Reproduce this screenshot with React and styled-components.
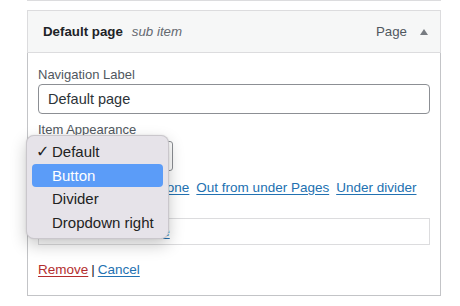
import React from "react";
import styled, { createGlobalStyle } from "styled-components";

const GlobalStyle = createGlobalStyle`
  body {
    margin: 0;
    background: #fff;
    font-family: "Liberation Sans", Arial, sans-serif;
    color: #1d2327;
  }
`;

const Page = styled.div`
  width: 460px;
  height: 306px;
  overflow: hidden;
`;

const PrevItem = styled.div`
  margin: 0 19px 0 27px;
  height: 1px;
  background: #dcdcde;
`;

const Card = styled.div`
  margin: 9px 19px 0 27px;
`;

const Header = styled.div`
  display: flex;
  align-items: center;
  height: 41px;
  padding: 0 12px 0 15px;
  background: #f6f7f7;
  border: 1px solid #dcdcde;
  font-size: 13.3px;
`;

const Title = styled.span`
  font-weight: bold;
  color: #1d2327;
`;

const SubTitle = styled.span`
  margin-left: 9px;
  font-style: italic;
  color: #646970;
  flex: 1;
`;

const ItemType = styled.span`
  color: #50575e;
  margin-right: 13px;
`;

const Body = styled.div`
  position: relative;
  padding: 13px 10px 16px;
  border: 1px solid #c3c4c7;
  border-top: none;
  font-size: 13px;
`;

const Label = styled.div`
  line-height: 17px;
  color: #50575e;
  margin-top: ${(p) => p.$gap || 0}px;
`;

const TextInput = styled.div`
  margin-top: 1px;
  height: 28px;
  display: flex;
  align-items: center;
  padding: 0 9px;
  border: 1px solid #8c8f94;
  border-radius: 4px;
  font-size: 14.5px;
  color: #2c3338;
`;

const SelectBox = styled.div`
  margin-top: 3px;
  width: 133px;
  height: 28px;
  border: 1px solid #8c8f94;
  border-radius: 3px;
`;

const LinkRow = styled.div`
  margin-top: 8px;
  display: flex;
  gap: 7px;
  line-height: 18px;
  font-size: 13.5px;
  color: #50575e;
`;

const A = styled.a`
  color: ${(p) => (p.$danger ? "#b32d2e" : "#2271b1")};
  text-decoration: underline;
  text-underline-offset: 2px;
  cursor: pointer;
`;

const Original = styled.div`
  margin-top: 21px;
  height: 25px;
  display: flex;
  align-items: center;
  gap: 4px;
  padding: 0 10px;
  border: 1px solid #dcdcde;
  color: #646970;
  font-size: 12px;
`;

const Actions = styled.div`
  margin-top: 16px;
  line-height: 18px;
  font-size: 13.5px;
  color: #1d2327;
`;

const Sep = styled.span`
  margin: 0 3px;
`;

const Menu = styled.div`
  position: absolute;
  left: -2px;
  top: 82px;
  width: 131px;
  padding: 4px 5px;
  background: #e6e3e9;
  border: 0.5px solid rgba(0, 0, 0, 0.12);
  border-radius: 8px;
  box-shadow: 0 6px 16px rgba(0, 0, 0, 0.22), 0 0 2px rgba(0, 0, 0, 0.1);
`;

const Option = styled.div`
  display: flex;
  align-items: center;
  height: 23.5px;
  padding-left: 4px;
  border-radius: 4px;
  font-size: 15px;
  color: ${(p) => (p.$active ? "#fff" : "#222")};
  background: ${(p) => (p.$active ? "#5b9cf8" : "transparent")};
`;

const Check = styled.span`
  width: 16px;
  font-size: 16px;
  font-weight: bold;
  font-family: "DejaVu Sans", sans-serif;
`;

const Arrow = () => (
  <svg width="8" height="6" viewBox="0 0 8 6">
    <path d="M4 0 L8 6 L0 6 Z" fill="#787c82" />
  </svg>
);

const options = ["Default", "Button", "Divider", "Dropdown right"];

export default function App() {
  return (
    <Page>
      <GlobalStyle />
      <PrevItem />
      <Card>
        <Header>
          <Title>Default page</Title>
          <SubTitle>sub item</SubTitle>
          <ItemType>Page</ItemType>
          <Arrow />
        </Header>
        <Body>
          <Label>Navigation Label</Label>
          <TextInput>Default page</TextInput>
          <Label $gap={7}>Item Appearance</Label>
          <SelectBox />
          <LinkRow>
            <span>Move</span>
            <A>Up one</A>
            <A>Down one</A>
            <A>Out from under Pages</A>
            <A>Under divider</A>
          </LinkRow>
          <Original>
            Original: <A>Sample Page</A>
          </Original>
          <Actions>
            <A $danger>Remove</A>
            <Sep>|</Sep>
            <A>Cancel</A>
          </Actions>
          <Menu>
            {options.map((o, i) => (
              <Option key={o} $active={o === "Button"}>
                <Check>{i === 0 ? "✓" : ""}</Check>
                {o}
              </Option>
            ))}
          </Menu>
        </Body>
      </Card>
    </Page>
  );
}
